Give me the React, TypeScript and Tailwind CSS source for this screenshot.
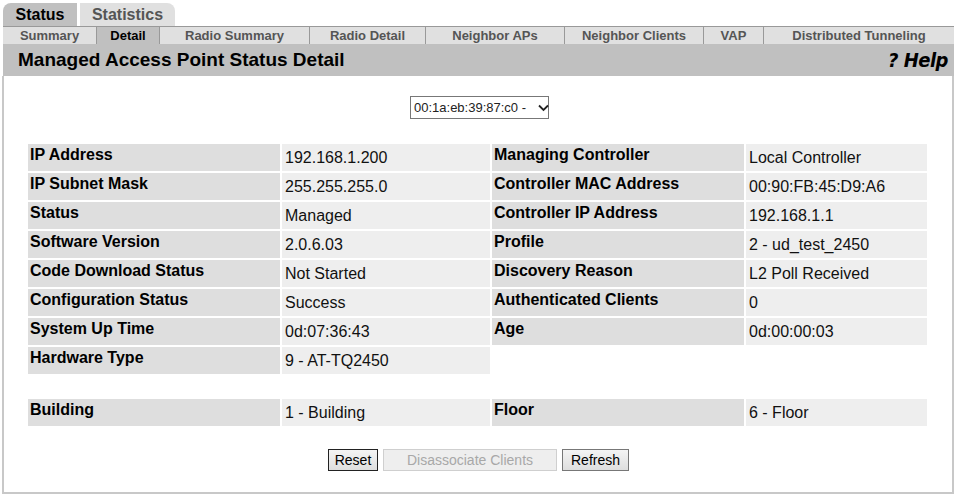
import React from "react";

// ---------- data ----------
const subTabs = [
  { label: "Summary", w: "w-[93px]" },
  { label: "Detail", w: "w-[63px]", active: true },
  { label: "Radio Summary", w: "w-[150px]" },
  { label: "Radio Detail", w: "w-[116px]" },
  { label: "Neighbor APs", w: "w-[139px]" },
  { label: "Neighbor Clients", w: "w-[139px]" },
  { label: "VAP", w: "w-[60px]" },
  { label: "Distributed Tunneling", w: "flex-1" },
];

const rows: [string, string, string?, string?][] = [
  ["IP Address", "192.168.1.200", "Managing Controller", "Local Controller"],
  ["IP Subnet Mask", "255.255.255.0", "Controller MAC Address", "00:90:FB:45:D9:A6"],
  ["Status", "Managed", "Controller IP Address", "192.168.1.1"],
  ["Software Version", "2.0.6.03", "Profile", "2 - ud_test_2450"],
  ["Code Download Status", "Not Started", "Discovery Reason", "L2 Poll Received"],
  ["Configuration Status", "Success", "Authenticated Clients", "0"],
  ["System Up Time", "0d:07:36:43", "Age", "0d:00:00:03"],
  ["Hardware Type", "9 - AT-TQ2450"],
];

// ---------- atoms ----------
const Label = ({ text }: { text: string }) => (
  <div className="w-[252px] h-[27px] bg-[#dedede] px-[2px] pt-[1px] text-[16px] font-bold leading-[19px] text-black">{text}</div>
);

const Value = ({ text, w }: { text: string; w: string }) => (
  <div className={`${w} h-[27px] bg-[#eeeeee] px-[3px] pt-[4px] text-[16px] leading-[19px] text-[#111]`}>{text}</div>
);

const Row = ({ r }: { r: [string, string, string?, string?] }) => (
  <div className="flex gap-[2px]">
    <Label text={r[0]} />
    <Value text={r[1]} w="w-[208px]" />
    {r[2] !== undefined && (
      <>
        <Label text={r[2]} />
        <Value text={r[3] || ""} w="w-[181px]" />
      </>
    )}
  </div>
);

const Btn = ({ children, w, disabled, dark }: { children: React.ReactNode; w: string; disabled?: boolean; dark?: boolean }) => (
  <button
    disabled={disabled}
    className={
      `${w} h-[22px] text-[14px] leading-[16px] ` +
      (disabled
        ? "border border-[#cfcfcf] bg-[#eeeeee] text-[#a8a8a8]"
        : dark
        ? "border border-[#222] bg-gradient-to-b from-[#f4f4f4] to-[#dedede] text-black"
        : "border border-[#777] bg-gradient-to-b from-[#f4f4f4] to-[#dedede] text-black")
    }
  >
    {children}
  </button>
);

export default function App() {
  return (
    <div className="w-[957px] h-[498px] bg-white overflow-hidden" style={{ fontFamily: '"Liberation Sans", Arial, sans-serif' }}>
      <div className="pl-[3px] pt-[3px] w-[954px]">
        {/* top tabs */}
        <div className="flex gap-[3px] h-[23px]">
          <div className="w-[74px] rounded-tl-[8px] bg-[#c0c0c0] text-center text-[16px] font-bold leading-[23px] text-black">Status</div>
          <div className="w-[95px] rounded-tr-[8px] bg-[#e0e0e0] text-center text-[16px] font-bold leading-[23px] text-[#555]">Statistics</div>
        </div>
        {/* sub tabs */}
        <div className="flex h-[18px] border-t border-[#999] bg-[#e0e0e0]">
          {subTabs.map((t, i) => (
            <div
              key={t.label}
              className={
                `${t.w} text-center text-[13px] font-bold leading-[17px] ` +
                (i > 0 ? "border-l border-[#999] " : "") +
                (t.active ? "bg-[#c0c0c0] text-black" : "text-[#555]")
              }
            >
              {t.label}
            </div>
          ))}
        </div>
        {/* title */}
        <div className="flex items-center justify-between h-[32px] bg-[#c0c0c0] pl-[15px] pr-[6px]">
          <div className="text-[19px] font-bold text-black">Managed Access Point Status Detail</div>
          <div className="text-[20px] font-bold italic tracking-[-0.5px] text-black" style={{ fontFamily: '"DejaVu Sans Condensed", "DejaVu Sans", sans-serif' }}>? Help</div>
        </div>
        {/* content */}
        <div className="h-[418px] border-l-2 border-r-2 border-b-2 border-[#c8c8c8] border-t-0 -ml-[1px]">
          <div className="flex justify-center pt-[20px] pl-[3px]">
            <div className="flex items-center h-[23px] w-[139px] border border-[#777] bg-white pl-[3px] text-[13px] text-[#222] whitespace-nowrap">
              <span className="whitespace-nowrap">00:1a:eb:39:87:c0 -</span>
              <svg className="ml-[12px] shrink-0" width="11" height="8" viewBox="0 0 11 8">
                <path d="M1 1.5 L5.5 6 L10 1.5" fill="none" stroke="#222" strokeWidth="1.8" />
              </svg>
            </div>
          </div>
          <div className="pl-[24px] pt-[25px] flex flex-col gap-[2px]">
            {rows.map((r) => (
              <Row key={r[0]} r={r} />
            ))}
          </div>
          <div className="pl-[24px] pt-[25px]">
            <Row r={["Building", "1 - Building", "Floor", "6 - Floor"]} />
          </div>
          <div className="flex justify-center gap-[5px] pt-[23px] pl-[1px]">
            <Btn w="w-[50px]" dark>Reset</Btn>
            <Btn w="w-[174px]" disabled>Disassociate Clients</Btn>
            <Btn w="w-[67px]">Refresh</Btn>
          </div>
        </div>
      </div>
    </div>
  );
}
